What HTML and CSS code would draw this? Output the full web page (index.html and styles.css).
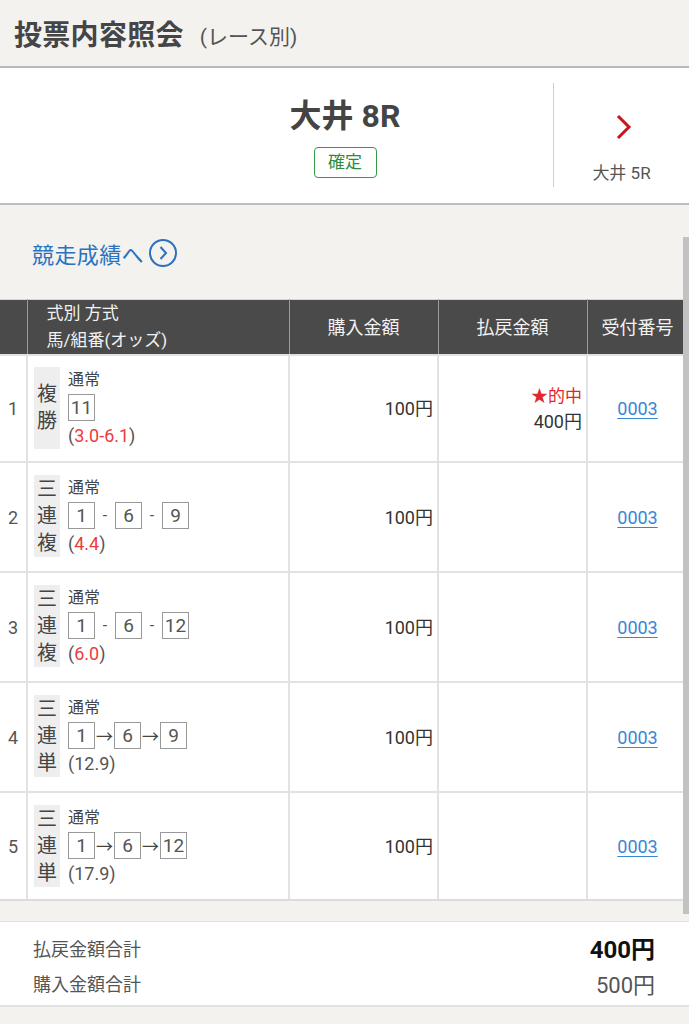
FILE: index.html
```html
<!DOCTYPE html>
<html lang="ja">
<head>
<meta charset="utf-8">
<title>投票内容照会</title>
<link rel="stylesheet" href="styles.css">
</head>
<body>
<header class="page-head">
  <h1 class="title">投票内容照会</h1><span class="subtitle">(レース別)</span>
</header>

<section class="race-box">
  <div class="race-main">
    <div class="race-name">大井 8R</div>
    <span class="badge">確定</span>
  </div>
  <a class="race-next" href="#">
    <svg class="chev" width="20" height="28" viewBox="0 0 20 28"><path d="M4 3 L15 14 L4 25" fill="none" stroke="#c8161d" stroke-width="3"/></svg>
    <span class="next-label">大井 5R</span>
  </a>
</section>

<div class="results-link-wrap">
  <a class="results-link" href="#">競走成績へ
    <svg class="circle-ico" width="30" height="30" viewBox="0 0 30 30"><circle cx="15" cy="15" r="13" fill="none" stroke="#2a72c0" stroke-width="2"/><path d="M12.5 9 L18 15 L12.5 21" fill="none" stroke="#2a72c0" stroke-width="2"/></svg>
  </a>
</div>

<div class="table-wrap">
<table class="bets">
  <colgroup>
    <col class="c-no"><col class="c-type"><col class="c-buy"><col class="c-pay"><col class="c-id">
  </colgroup>
  <thead>
    <tr>
      <th></th>
      <th class="th-left">式別 方式<br>馬/組番(オッズ)</th>
      <th>購入金額</th>
      <th>払戻金額</th>
      <th>受付番号</th>
    </tr>
  </thead>
  <tbody>
    <tr class="row-first">
      <td class="no">1</td>
      <td class="bet">
        <div class="bet-inner">
          <div class="kind"><span>複</span><span>勝</span></div>
          <div class="detail">
            <div class="method">通常</div>
            <div class="combo"><span class="num">11</span></div>
            <div class="odds">(<span class="red">3.0-6.1</span>)</div>
          </div>
        </div>
      </td>
      <td class="amt">100円</td>
      <td class="amt"><div class="hit">★的中</div><div>400円</div></td>
      <td class="rid"><a href="#">0003</a></td>
    </tr>
    <tr>
      <td class="no">2</td>
      <td class="bet">
        <div class="bet-inner">
          <div class="kind"><span>三</span><span>連</span><span>複</span></div>
          <div class="detail">
            <div class="method">通常</div>
            <div class="combo"><span class="num">1</span><span class="dash">-</span><span class="num">6</span><span class="dash">-</span><span class="num">9</span></div>
            <div class="odds">(<span class="red">4.4</span>)</div>
          </div>
        </div>
      </td>
      <td class="amt">100円</td>
      <td class="amt"></td>
      <td class="rid"><a href="#">0003</a></td>
    </tr>
    <tr>
      <td class="no">3</td>
      <td class="bet">
        <div class="bet-inner">
          <div class="kind"><span>三</span><span>連</span><span>複</span></div>
          <div class="detail">
            <div class="method">通常</div>
            <div class="combo"><span class="num">1</span><span class="dash">-</span><span class="num">6</span><span class="dash">-</span><span class="num">12</span></div>
            <div class="odds">(<span class="red">6.0</span>)</div>
          </div>
        </div>
      </td>
      <td class="amt">100円</td>
      <td class="amt"></td>
      <td class="rid"><a href="#">0003</a></td>
    </tr>
    <tr>
      <td class="no">4</td>
      <td class="bet">
        <div class="bet-inner">
          <div class="kind"><span>三</span><span>連</span><span>単</span></div>
          <div class="detail">
            <div class="method">通常</div>
            <div class="combo"><span class="num">1</span><span class="arrow">→</span><span class="num">6</span><span class="arrow">→</span><span class="num">9</span></div>
            <div class="odds">(12.9)</div>
          </div>
        </div>
      </td>
      <td class="amt">100円</td>
      <td class="amt"></td>
      <td class="rid"><a href="#">0003</a></td>
    </tr>
    <tr class="row-last">
      <td class="no">5</td>
      <td class="bet">
        <div class="bet-inner">
          <div class="kind"><span>三</span><span>連</span><span>単</span></div>
          <div class="detail">
            <div class="method">通常</div>
            <div class="combo"><span class="num">1</span><span class="arrow">→</span><span class="num">6</span><span class="arrow">→</span><span class="num">12</span></div>
            <div class="odds">(17.9)</div>
          </div>
        </div>
      </td>
      <td class="amt">100円</td>
      <td class="amt"></td>
      <td class="rid"><a href="#">0003</a></td>
    </tr>
  </tbody>
</table>
<div class="scrollbar"></div>
</div>

<section class="totals">
  <div class="total-row"><span class="t-label">払戻金額合計</span><span class="t-pay">400円</span></div>
  <div class="total-row"><span class="t-label">購入金額合計</span><span class="t-buy">500円</span></div>
</section>
</body>
</html>
```

FILE: styles.css
```css
html, body {
  margin: 0;
  padding: 0;
}
body {
  width: 689px;
  min-height: 1024px;
  background: #f3f2ef;
  font-family: "Roboto", "Noto Sans CJK JP", sans-serif;
  color: #333;
  overflow: hidden;
}
a { text-decoration: none; }

.page-head {
  height: 66px;
  display: flex;
  align-items: center;
  padding-left: 14px;
  border-bottom: 2px solid #b9b9b9;
  box-sizing: content-box;
}
.title {
  margin: 0;
  font-size: 28px;
  font-weight: 700;
  color: #454545;
  letter-spacing: 0.3px;
}
.subtitle {
  margin-left: 16px;
  font-size: 21px;
  color: #555;
  padding-top: 3px;
}

.race-box {
  background: #fff;
  height: 135px;
  border-bottom: 2px solid #bdbdbd;
  display: flex;
  align-items: center;
  position: relative;
}
.race-main {
  flex: 1;
  display: flex;
  flex-direction: column;
  align-items: center;
  padding-left: 137px;
  padding-top: 2px;
}
.race-name {
  font-size: 32px;
  font-weight: 700;
  color: #444;
  line-height: 40px;
}
.badge {
  margin-top: 11px;
  width: 61px;
  height: 29px;
  border: 1px solid #35994a;
  border-radius: 4px;
  color: #2e8b3e;
  font-size: 17px;
  line-height: 29px;
  text-align: center;
}
.race-next {
  width: 135px;
  height: 104px;
  border-left: 1px solid #cfcfcf;
  display: flex;
  flex-direction: column;
  align-items: center;
  justify-content: flex-start;
  margin-top: -1px;
}
.chev { display: block; margin-top: 30px; margin-left: 4px; }
.next-label {
  margin-top: 18px;
  font-size: 17px;
  color: #555;
}

.results-link-wrap {
  height: 94px;
  display: flex;
  align-items: center;
  padding-left: 32px;
  padding-top: 2px;
  box-sizing: border-box;
}
.results-link {
  display: flex;
  align-items: center;
  font-size: 22px;
  color: #2a72c0;
  letter-spacing: 0.4px;
}
.circle-ico { margin-left: 4px; }

.table-wrap {
  position: relative;
}
.bets {
  width: 688px;
  border-collapse: collapse;
  table-layout: fixed;
  background: #fff;
  border-top: 1px solid #d6d6d6;
}
.c-no { width: 27px; }
.c-type { width: 262px; }
.c-buy { width: 149px; }
.c-pay { width: 149px; }
.c-id { width: 101px; }

.bets th {
  background: #4a4a4a;
  color: #f2f2f2;
  font-weight: 400;
  font-size: 18px;
  height: 54px;
  padding: 0;
  border: 1px solid #9a9a9a;
  border-top: none;
  text-align: center;
  line-height: 27px;
}
.bets th:first-child { border-left: none; }
.bets th.th-left {
  text-align: left;
  padding-left: 19px;
  font-size: 17px;
}
.bets td {
  border: 2px solid #e2e2e2;
  padding: 0;
  vertical-align: middle;
}
.bets td:first-child { border-left: none; }
.bets tr:last-child td { border-bottom: 2px solid #dcdcdc; }

.no {
  text-align: center;
  font-size: 18px;
  color: #555;
}
.bet { padding: 12px 0 14px 6px !important; }
.row-first .bet { padding-top: 11px !important; padding-bottom: 12px !important; }
.row-last .bet { padding-bottom: 12px !important; }
.bet-inner {
  display: flex;
  align-items: stretch;
}
.kind {
  width: 26px;
  background: #eeeeee;
  display: flex;
  flex-direction: column;
  justify-content: center;
  align-items: center;
  font-size: 20px;
  line-height: 27px;
  color: #444;
}
.detail {
  margin-left: 8px;
  color: #444;
}
.method {
  font-size: 16px;
  line-height: 26px;
}
.combo {
  display: flex;
  align-items: center;
  height: 29px;
}
.num {
  display: inline-block;
  width: 25px;
  height: 25px;
  border: 1px solid #999;
  text-align: center;
  font-size: 19px;
  line-height: 25px;
  color: #555;
}
.dash {
  width: 20px;
  text-align: center;
  font-size: 16px;
  color: #555;
}
.arrow {
  width: 19px;
  text-align: center;
  font-size: 17px;
  color: #444;
}
.odds {
  font-size: 18px;
  line-height: 27px;
  color: #555;
}
.red { color: #ee3b3b; }

.amt {
  text-align: right;
  padding-right: 4px !important;
  font-size: 18px;
  color: #333;
  line-height: 25px;
}
.hit {
  color: #e0262e;
  font-size: 17px;
}
.rid {
  text-align: center;
  font-size: 18px;
}
.rid a {
  color: #3a86d6;
  text-decoration: underline;
  text-underline-offset: 3px;
}

.scrollbar {
  position: absolute;
  right: 0;
  top: -62px;
  width: 6px;
  height: 677px;
  background: #c2c2c2;
}

.totals {
  margin-top: 20px;
  background: #fff;
  border-top: 1px solid #e2e2e2;
  border-bottom: 2px solid #e2e2e2;
  padding: 8px 34px 5px 33px;
}
.total-row {
  display: flex;
  justify-content: space-between;
  align-items: center;
  height: 35px;
}
.t-label {
  font-size: 18px;
  color: #555;
}
.t-pay {
  font-size: 24px;
  font-weight: 700;
  color: #111;
}
.t-buy {
  font-size: 22px;
  color: #555;
}
```
